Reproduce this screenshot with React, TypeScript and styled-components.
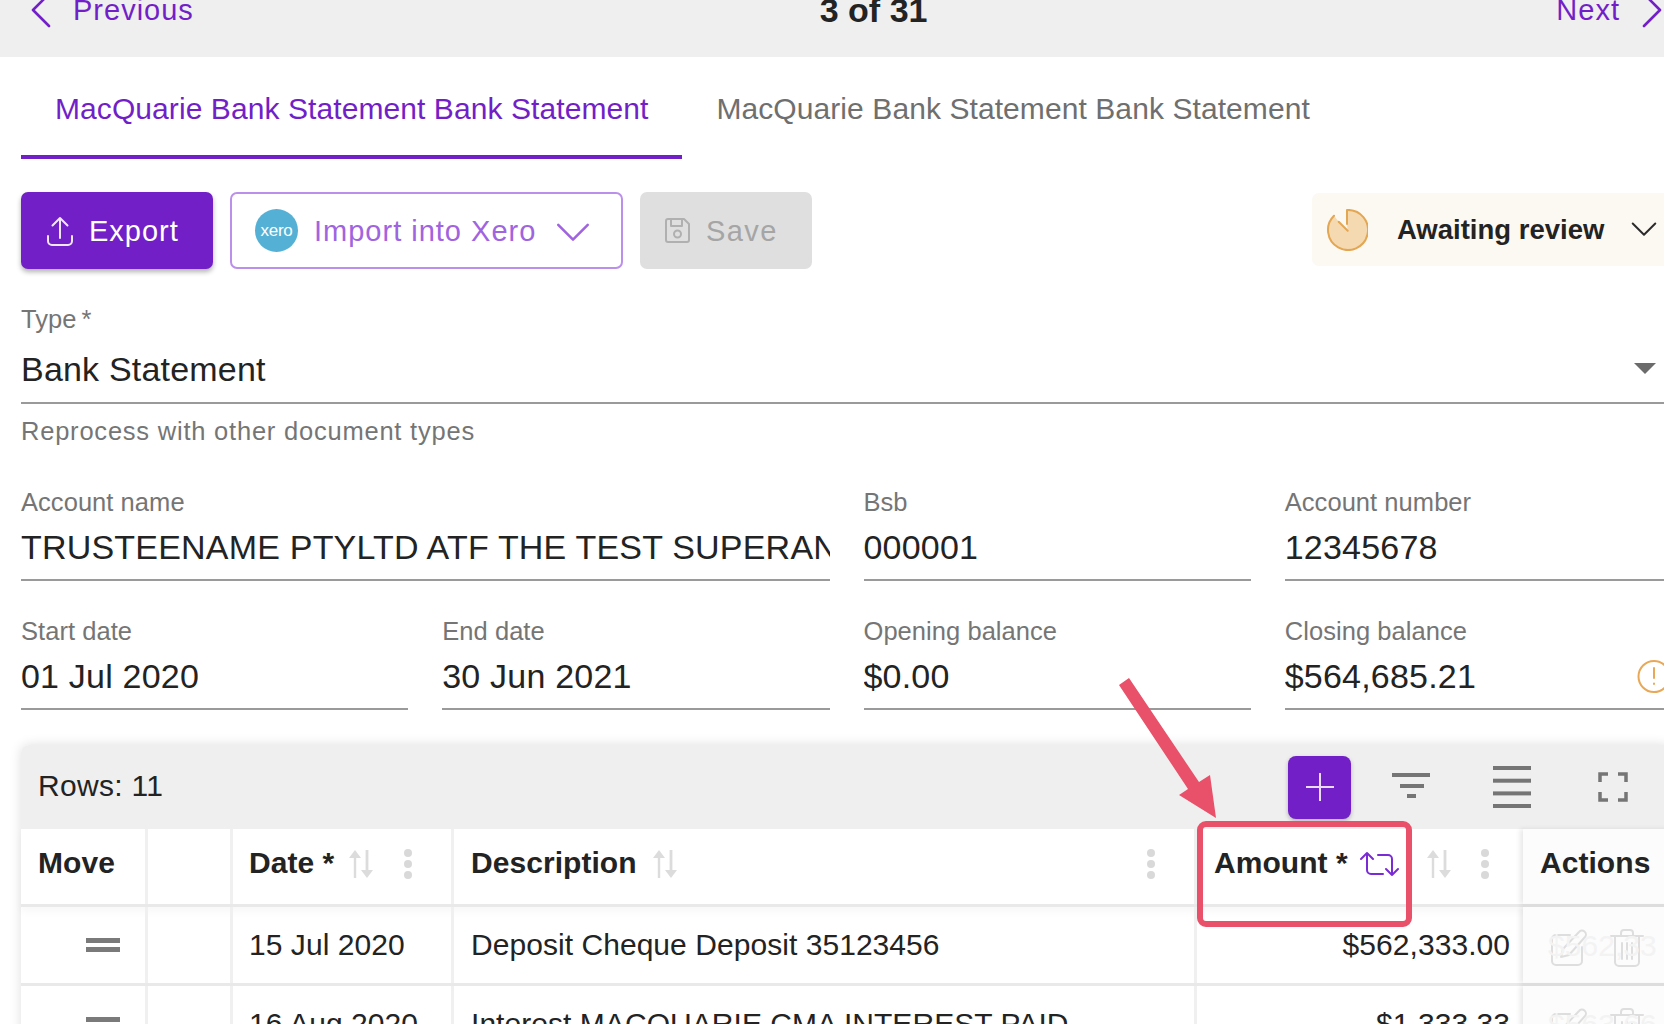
import React from 'react';
import styled, { createGlobalStyle } from 'styled-components';

const PURPLE = '#721fc8';

const GlobalStyle = createGlobalStyle`
  html, body {
    margin: 0;
    padding: 0;
    background: #fff;
    font-family: "Liberation Sans", Arial, sans-serif;
    color: #232323;
  }
  * { box-sizing: border-box; }
`;

const Root = styled.div`
  position: relative;
  width: 1664px;
  height: 1024px;
  overflow: hidden;
`;

const Page = styled.div`
  width: 1693px;
  margin-top: -26px;
`;

const TopBar = styled.div`
  height: 83px;
  padding: 15px 30px 0 30px;
  background: #efefef;
  display: flex;
  justify-content: space-between;
  align-items: flex-start;
`;

const PagerLink = styled.div`
  display: flex;
  align-items: center;
  gap: 21px;
  height: 42px;
  font-size: 29px;
  letter-spacing: 1px;
  color: ${PURPLE};
`;

const PageCount = styled.div`
  height: 42px;
  line-height: 42px;
  font-size: 34px;
  font-weight: 700;
  margin-right: 3px;
`;

const Tabs = styled.div`
  display: flex;
  padding: 0 21px;
`;

const Tab = styled.div<{ $active?: boolean }>`
  height: 102px;
  padding: 0 34px;
  line-height: 104px;
  font-size: 30px;
  letter-spacing: 0.08px;
  white-space: nowrap;
  color: ${(p) => (p.$active ? PURPLE : '#6f6f6f')};
  border-bottom: 4px solid ${(p) => (p.$active ? PURPLE : 'transparent')};
`;

const Content = styled.div`
  padding: 33px 21px 0;
`;

const ActionRow = styled.div`
  display: flex;
  align-items: flex-start;
  gap: 17px;
`;

const ActionButton = styled.div<{ $width: number; $gap: number; $pad: number }>`
  width: ${(p) => p.$width}px;
  height: 77px;
  padding-left: ${(p) => p.$pad}px;
  display: flex;
  align-items: center;
  gap: ${(p) => p.$gap}px;
  border-radius: 7px;
  font-size: 29px;
  letter-spacing: 1px;
`;

const ButtonLabel = styled.span`
  margin-top: 2px;
`;

const ExportButton = styled(ActionButton)`
  background: ${PURPLE};
  color: #fff;
  box-shadow: 0 3px 5px rgba(0, 0, 0, 0.3);
`;

const ImportButton = styled(ActionButton)`
  background: #fff;
  color: #a064e0;
  border: 2px solid #bb90ea;
`;

const SaveButton = styled(ActionButton)`
  background: #dfdfdf;
  color: #a5a5a5;
  letter-spacing: 1.4px;
`;

const XeroBadge = styled.div`
  width: 43px;
  height: 43px;
  border-radius: 50%;
  background: #54b1d5;
  color: #fff;
  font-size: 17px;
  letter-spacing: -0.3px;
  line-height: 43px;
  text-align: center;
`;

const ImportChevron = styled.div`
  display: flex;
  margin: 4px 0 0 4px;
`;

const StatusChip = styled.div`
  margin-left: auto;
  width: 360px;
  height: 73px;
  margin-top: 1px;
  padding-left: 14px;
  display: flex;
  align-items: center;
  background: #fcf8f2;
  border-radius: 7px;
`;

const StatusText = styled.div`
  margin-left: 29px;
  margin-right: 27px;
  font-size: 27.5px;
  font-weight: 700;
`;

const FieldLabel = styled.div<{ $tightStar?: boolean }>`
  height: 30px;
  line-height: 30px;
  font-size: 25.5px;
  letter-spacing: 0.05px;
  word-spacing: ${(p) => (p.$tightStar ? -2 : 0)}px;
  color: #757575;
`;

const FieldValue = styled.div<{ $tall?: boolean }>`
  margin-top: ${(p) => (p.$tall ? 12 : 7)}px;
  height: ${(p) => (p.$tall ? 58 : 57)}px;
  padding-bottom: ${(p) => (p.$tall ? 10 : 9)}px;
  line-height: 46px;
  font-size: 34px;
  letter-spacing: 0.2px;
  white-space: nowrap;
  overflow: hidden;
  display: flex;
  justify-content: space-between;
  align-items: center;
  border-bottom: 2px solid #9a9a9a;
`;

const TypeField = styled.div`
  margin-top: 35px;
`;

const HelperText = styled.div`
  margin-top: 11px;
  height: 32px;
  line-height: 32px;
  font-size: 25.5px;
  letter-spacing: 0.78px;
  color: #757575;
`;

const FieldGrid = styled.div`
  margin-top: 40px;
  display: grid;
  grid-template-columns: repeat(4, 1fr);
  column-gap: 34px;
  row-gap: 35px;
`;

const Field = styled.div<{ $span?: number }>`
  grid-column: span ${(p) => p.$span || 1};
  min-width: 0;
`;

const TableCard = styled.div`
  margin-top: 35px;
  border-radius: 8px 8px 0 0;
  box-shadow: 0 0 12px rgba(0, 0, 0, 0.13);
  background: #fff;
`;

const TableToolbar = styled.div`
  height: 84px;
  padding: 0 9px 2px 17px;
  display: flex;
  align-items: center;
  background: #efefef;
  border-radius: 8px 8px 0 0;
  font-size: 30px;
  letter-spacing: 0.3px;
`;

const AddButton = styled.div`
  margin-left: auto;
  margin-right: 9px;
  margin-bottom: -2px;
  width: 63px;
  height: 63px;
  display: flex;
  align-items: center;
  justify-content: center;
  background: ${PURPLE};
  border-radius: 8px;
  box-shadow: 0 2px 4px rgba(0, 0, 0, 0.25);
`;

const ToolSlot = styled.div`
  width: 101px;
  margin-bottom: -2px;
  display: flex;
  justify-content: center;
`;

const Row = styled.div<{ $header?: boolean }>`
  display: grid;
  grid-template-columns: 127px 85px 221px 743px 329px 1fr;
  height: ${(p) => (p.$header ? 78 : 79)}px;
  border-bottom: 3px solid #e9e9e9;
  font-size: 30px;
  letter-spacing: 0.05px;
  position: relative;
  ${(p) => p.$header && 'box-shadow: 0 5px 8px rgba(0, 0, 0, 0.03);'}
`;

const Cell = styled.div<{ $right?: boolean; $pad?: number }>`
  padding: 0 13px 0 ${(p) => (p.$pad === undefined ? 16 : p.$pad)}px;
  display: flex;
  align-items: center;
  justify-content: ${(p) => (p.$right ? 'flex-end' : 'flex-start')};
  border-right: 3px solid #f0f0f0;
  white-space: nowrap;
  overflow: hidden;
`;

const HeaderCell = styled.div<{ $pad?: number; $padRight?: number }>`
  padding: 0 ${(p) => (p.$padRight === undefined ? 39 : p.$padRight)}px 8px ${(p) => (p.$pad === undefined ? 16 : p.$pad)}px;
  display: flex;
  align-items: center;
  border-right: 3px solid #f0f0f0;
  font-weight: 700;
  white-space: nowrap;
`;

const SortSlot = styled.div<{ $left: number }>`
  margin-left: ${(p) => p.$left}px;
  margin-top: 2px;
  display: flex;
`;

const MenuDots = styled.div`
  margin-left: auto;
  margin-top: 2px;
  display: flex;
  flex-direction: column;
  gap: 3px;
`;

const MenuDot = styled.span`
  width: 8px;
  height: 8px;
  border-radius: 50%;
  background: #d9d9d9;
`;

const ActionsCell = styled.div<{ $header?: boolean }>`
  position: relative;
  margin-left: -3px;
  padding: ${(p) => (p.$header ? '0 0 8px 17px' : '6px 0 0 27px')};
  display: flex;
  align-items: center;
  gap: 22px;
  background: #fcfcfc;
  box-shadow: -3px 0 5px rgba(0, 0, 0, 0.09);
  font-weight: ${(p) => (p.$header ? 700 : 400)};
  overflow: hidden;
`;

const GhostValue = styled.span`
  position: absolute;
  left: 25px;
  top: 22px;
  color: #f3f3f3;
  white-space: nowrap;
`;

const DragHandle = styled.div`
  margin-left: 48px;
  width: 34px;
  height: 14px;
  border-top: 5px solid #7a7a7a;
  border-bottom: 5px solid #7a7a7a;
`;

const Annotation = styled.svg`
  position: absolute;
  left: 0;
  top: 0;
  pointer-events: none;
`;

const Highlight = styled.div`
  position: absolute;
  left: 1197px;
  top: 821px;
  width: 215px;
  height: 106px;
  border: 6px solid #e95069;
  border-radius: 9px;
`;

const Chevron = ({ right }: { right?: boolean }) => (
  <svg width="22" height="36" viewBox="0 0 22 36" fill="none" stroke={PURPLE} strokeWidth="2.6" strokeLinecap="round" strokeLinejoin="round">
    <path d={right ? 'M3 2l16 16L3 34' : 'M19 2L3 18l16 16'} />
  </svg>
);

const UploadIcon = () => (
  <svg width="28" height="30" viewBox="0 0 28 30" fill="none" stroke="#f0e6fa" strokeWidth="2" strokeLinecap="round" strokeLinejoin="round">
    <path d="M2 20v5a4 4 0 0 0 4 4h16a4 4 0 0 0 4-4v-5" />
    <path d="M14 22V2M6.5 9.5L14 2l7.5 7.5" />
  </svg>
);

const SaveIcon = () => (
  <svg width="27" height="27" viewBox="0 0 27 27" fill="none" stroke="#b0b0b0" strokeWidth="2" strokeLinejoin="round">
    <path d="M4 2h16l5 5v16a2 2 0 0 1-2 2H4a2 2 0 0 1-2-2V4a2 2 0 0 1 2-2z" />
    <path d="M7 2v7h11V2" />
    <circle cx="13.5" cy="17" r="3.5" />
  </svg>
);

const DownChevron = ({ color, w }: { color: string; w: number }) => (
  <svg width={w} height={w * 0.55} viewBox="0 0 34 19" fill="none" stroke={color} strokeWidth="2.6" strokeLinecap="round" strokeLinejoin="round">
    <path d="M2 2l15 15L32 2" />
  </svg>
);

const PieIcon = () => (
  <svg width="42" height="42" viewBox="0 0 42 42" fill="none" stroke="#e3a652" strokeWidth="2" strokeLinecap="round" strokeLinejoin="round">
    <path d="M21 1A20 20 0 1 1 8 6.7L12.7 12.7L21.7 21.7L21 15Z" fill="#f5d9b0" stroke="none" />
    <path d="M21 15V1A20 20 0 1 1 8 6.7" />
    <path d="M12.7 12.7l9 9" />
  </svg>
);

const SelectArrow = () => (
  <svg width="38" height="12" viewBox="0 0 38 12" fill="#6b6b6b">
    <path d="M0 0h22L11 11z" />
  </svg>
);

const WarnIcon = () => (
  <svg width="35" height="35" viewBox="0 0 35 35" fill="none" stroke="#e9a857" strokeWidth="2" strokeLinecap="round">
    <circle cx="17" cy="17.5" r="15.5" />
    <path d="M17 9v10M17 24.5v.5" />
  </svg>
);

const PlusIcon = () => (
  <svg width="28" height="28" viewBox="0 0 28 28" stroke="#eadcf8" strokeWidth="2">
    <path d="M14 0v28M0 14h28" />
  </svg>
);

const FilterIcon = () => (
  <svg width="38" height="29" viewBox="0 0 38 29" fill="#757575">
    <rect x="0" y="0" width="38" height="4" />
    <rect x="8" y="11" width="24" height="4" />
    <rect x="15" y="21" width="9" height="4" />
  </svg>
);

const LinesIcon = () => (
  <svg width="38" height="42" viewBox="0 0 38 42" fill="#757575">
    <rect x="0" y="0" width="38" height="4" />
    <rect x="0" y="12.7" width="38" height="4" />
    <rect x="0" y="25.4" width="38" height="4" />
    <rect x="0" y="38" width="38" height="4" />
  </svg>
);

const FullscreenIcon = () => (
  <svg width="30" height="30" viewBox="0 0 30 30" fill="none" stroke="#757575" strokeWidth="3.5">
    <path d="M2 10V2h8M20 2h8v8M28 20v8h-8M10 28H2v-8" />
  </svg>
);

const SortIcon = () => (
  <svg width="26" height="28" viewBox="0 0 26 28" fill="#dcdcdc">
    <path d="M7 0l6 8H8.2v20H5.8V8H1z" />
    <path d="M19 28l-6-8h4.6V0h2.8v20H25z" />
  </svg>
);

const SwapIcon = () => (
  <svg width="39" height="26" viewBox="0 0 39 26" fill="none" stroke="#7a2bd6" strokeWidth="2" strokeLinecap="round" strokeLinejoin="round">
    <path d="M1 8l6-6 6 6M7 2v17a4 4 0 0 0 4 4h12" />
    <path d="M18 4h10a4 4 0 0 1 4 4v16M26 18l6 6 6-6" />
  </svg>
);

const EditIcon = () => (
  <svg width="38" height="38" viewBox="0 0 38 38" fill="none" stroke="#dedede" strokeWidth="2" strokeLinecap="round" strokeLinejoin="round">
    <path d="M20 6H6a4 4 0 0 0-4 4v22a4 4 0 0 0 4 4h22a4 4 0 0 0 4-4V18" />
    <path d="M11 28l2-8L29 3a3.5 3.5 0 0 1 6 5L19 26z" />
  </svg>
);

const TrashIcon = () => (
  <svg width="34" height="38" viewBox="0 0 34 38" fill="none" stroke="#dedede" strokeWidth="2" strokeLinecap="round" strokeLinejoin="round">
    <path d="M1 7h32M11 7V4a3 3 0 0 1 3-3h6a3 3 0 0 1 3 3v3" />
    <path d="M5 7v26a4 4 0 0 0 4 4h16a4 4 0 0 0 4-4V7" />
    <path d="M12 14v16M17 14v16M22 14v16" />
  </svg>
);

const Dots = () => (
  <MenuDots>
    <MenuDot />
    <MenuDot />
    <MenuDot />
  </MenuDots>
);

const rows = [
  { date: '15 Jul 2020', text: 'Deposit Cheque Deposit 35123456', amount: '$562,333.00', ghost: '$562,33' },
  { date: '16 Aug 2020', text: 'Interest MACQUARIE CMA INTEREST PAID', amount: '$1,333.33', ghost: '$563,66' },
];

export default function App() {
  return (
    <Root>
      <GlobalStyle />
      <Page>
        <TopBar>
          <PagerLink>
            <Chevron />
            Previous
          </PagerLink>
          <PageCount>3 of 31</PageCount>
          <PagerLink>
            Next
            <Chevron right />
          </PagerLink>
        </TopBar>

        <Tabs>
          <Tab $active>MacQuarie Bank Statement Bank Statement</Tab>
          <Tab>MacQuarie Bank Statement Bank Statement</Tab>
        </Tabs>

        <Content>
          <ActionRow>
            <ExportButton $width={192} $pad={25} $gap={15}>
              <UploadIcon />
              <ButtonLabel>Export</ButtonLabel>
            </ExportButton>
            <ImportButton $width={393} $pad={23} $gap={16}>
              <XeroBadge>xero</XeroBadge>
              <ButtonLabel>Import into Xero</ButtonLabel>
              <ImportChevron>
                <DownChevron color="#a064e0" w={34} />
              </ImportChevron>
            </ImportButton>
            <SaveButton $width={172} $pad={24} $gap={15}>
              <SaveIcon />
              <ButtonLabel>Save</ButtonLabel>
            </SaveButton>
            <StatusChip>
              <PieIcon />
              <StatusText>Awaiting review</StatusText>
              <DownChevron color="#2b2b2b" w={26} />
            </StatusChip>
          </ActionRow>

          <TypeField>
            <FieldLabel $tightStar>Type *</FieldLabel>
            <FieldValue $tall>
              Bank Statement
              <SelectArrow />
            </FieldValue>
            <HelperText>Reprocess with other document types</HelperText>
          </TypeField>

          <FieldGrid>
            <Field $span={2}>
              <FieldLabel>Account name</FieldLabel>
              <FieldValue>TRUSTEENAME PTYLTD ATF THE TEST SUPERANNUATION FUND</FieldValue>
            </Field>
            <Field>
              <FieldLabel>Bsb</FieldLabel>
              <FieldValue>000001</FieldValue>
            </Field>
            <Field>
              <FieldLabel>Account number</FieldLabel>
              <FieldValue>12345678</FieldValue>
            </Field>
            <Field>
              <FieldLabel>Start date</FieldLabel>
              <FieldValue>01 Jul 2020</FieldValue>
            </Field>
            <Field>
              <FieldLabel>End date</FieldLabel>
              <FieldValue>30 Jun 2021</FieldValue>
            </Field>
            <Field>
              <FieldLabel>Opening balance</FieldLabel>
              <FieldValue>$0.00</FieldValue>
            </Field>
            <Field>
              <FieldLabel>Closing balance</FieldLabel>
              <FieldValue>
                $564,685.21
                <WarnIcon />
              </FieldValue>
            </Field>
          </FieldGrid>

          <TableCard>
            <TableToolbar>
              Rows: 11
              <AddButton>
                <PlusIcon />
              </AddButton>
              <ToolSlot>
                <FilterIcon />
              </ToolSlot>
              <ToolSlot>
                <LinesIcon />
              </ToolSlot>
              <ToolSlot>
                <FullscreenIcon />
              </ToolSlot>
            </TableToolbar>

            <Row $header>
              <HeaderCell $pad={17}>Move</HeaderCell>
              <HeaderCell />
              <HeaderCell>
                Date *
                <SortSlot $left={14}>
                  <SortIcon />
                </SortSlot>
                <Dots />
              </HeaderCell>
              <HeaderCell $pad={17}>
                Description
                <SortSlot $left={15}>
                  <SortIcon />
                </SortSlot>
                <Dots />
              </HeaderCell>
              <HeaderCell $pad={17} $padRight={34}>
                Amount *
                <SortSlot $left={12}>
                  <SwapIcon />
                </SortSlot>
                <SortSlot $left={27}>
                  <SortIcon />
                </SortSlot>
                <Dots />
              </HeaderCell>
              <ActionsCell $header>Actions</ActionsCell>
            </Row>

            {rows.map((row) => (
              <Row key={row.date}>
                <Cell $pad={17}>
                  <DragHandle />
                </Cell>
                <Cell />
                <Cell>{row.date}</Cell>
                <Cell $pad={17}>{row.text}</Cell>
                <Cell $right>{row.amount}</Cell>
                <ActionsCell>
                  <GhostValue>{row.ghost}</GhostValue>
                  <EditIcon />
                  <TrashIcon />
                </ActionsCell>
              </Row>
            ))}
          </TableCard>
        </Content>
      </Page>

      <Annotation width="1664" height="1024" viewBox="0 0 1664 1024">
        <polygon points="1119,685 1129,678 1199,782 1210,775 1216,818 1179,795 1188,789" fill="#e95069" />
      </Annotation>
      <Highlight />
    </Root>
  );
}
